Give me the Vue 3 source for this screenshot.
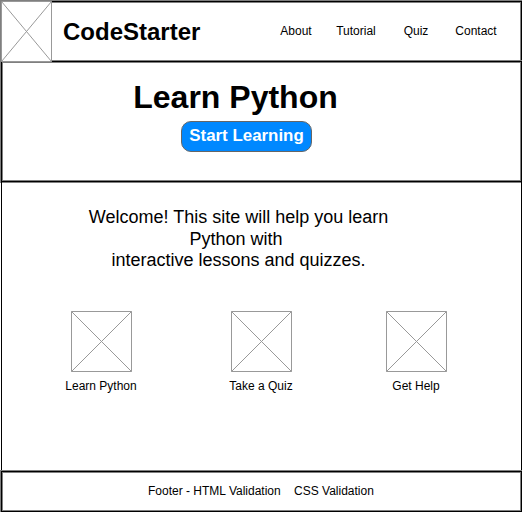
<script setup>
const links = ['About', 'Tutorial', 'Quiz', 'Contact']
const cards = ['Learn Python', 'Take a Quiz', 'Get Help']
</script>

<template>
  <div class="page">
    <header class="panel header">
      <svg class="logo" width="51" height="61" viewBox="0 0 51 61">
        <path d="M.5 .5H50.5V60.5H.5Z" fill="#fff" />
        <path d="M.5 .5H50.5V60.5H.5ZL50.5 60.5M50.5 .5L.5 60.5" fill="none" stroke="#999" />
      </svg>
      <div class="brand">CodeStarter</div>
      <nav class="nav">
        <a v-for="link in links" :key="link">{{ link }}</a>
      </nav>
    </header>

    <section class="panel hero">
      <h1>Learn Python</h1>
      <button class="start">Start Learning</button>
    </section>

    <main class="main">
      <p class="intro">Welcome! This site will help you learn<br />Python with&nbsp;<br />interactive lessons and quizzes.</p>
      <div class="cards">
        <div v-for="card in cards" :key="card" class="card">
          <svg width="61" height="61" viewBox="0 0 61 61">
            <path d="M.5 .5H60.5V60.5H.5ZL60.5 60.5M60.5 .5L.5 60.5" fill="none" stroke="#999" />
          </svg>
          <span>{{ card }}</span>
        </div>
      </div>
    </main>

    <footer class="panel footer">
      <span>Footer - HTML Validation</span>
      <span>CSS Validation</span>
    </footer>
  </div>
</template>

<style>
body {
  margin: 0;
  background: #fff;
  overflow: hidden;
}
</style>

<style scoped>
.page {
  box-sizing: border-box;
  width: 522px;
  height: 512px;
  padding: 1px 0 0 1px;
  display: flex;
  flex-direction: column;
  font-family: "Liberation Sans", Arial, sans-serif;
  font-size: 12px;
  line-height: 14px;
  color: #000;
  overflow: hidden;
}
.panel,
.main {
  box-sizing: border-box;
  border: 1px solid #000;
  flex: none;
}
.panel {
  box-shadow: 0 0 0 1px #7f7f7f, inset 0 0 0 1px #7f7f7f;
}
.header {
  height: 61px;
  display: flex;
  align-items: flex-start;
}
.logo {
  display: block;
  flex: none;
  margin: -1px 0 0 -1px;
  position: relative;
  z-index: 1;
}
.brand {
  margin: 16px 0 0 11px;
  width: 203px;
  font-size: 24px;
  line-height: 28px;
  font-weight: 700;
}
.nav {
  margin-top: 22px;
  display: flex;
  text-align: center;
}
.nav a {
  width: 60px;
}
.hero {
  height: 121px;
  margin-top: -1px;
  padding: 16px 52px 0 0;
  display: flex;
  flex-direction: column;
  align-items: center;
}
h1 {
  margin: 0;
  font-size: 32px;
  line-height: 38px;
  font-weight: 700;
}
.start {
  box-sizing: border-box;
  width: 131px;
  height: 31px;
  margin: 5px 0 0 22px;
  padding: 0 0 2px;
  border: 1px solid #666;
  border-radius: 10px;
  background: #0088ff;
  color: #fff;
  font: 700 16.9px/20px "Liberation Sans", Arial, sans-serif;
}
.main {
  height: 291px;
  margin-top: -1px;
  padding-top: 25px;
}
.intro {
  margin: 0 0 0 76.5px;
  width: 320px;
  font-size: 18px;
  line-height: 21.6px;
  text-align: center;
}
.cards {
  display: flex;
  margin: 39px 0 0 39px;
}
.card {
  width: 120px;
  display: flex;
  flex-direction: column;
  align-items: center;
}
.card + .card { margin-left: 40px; }
.card + .card + .card { margin-left: 35px; }
.card svg {
  display: block;
  margin-bottom: 7px;
}
.footer {
  height: 41px;
  margin-top: -1px;
  padding: 12px 0 0 146px;
  display: flex;
  gap: 13.3px;
}
</style>
